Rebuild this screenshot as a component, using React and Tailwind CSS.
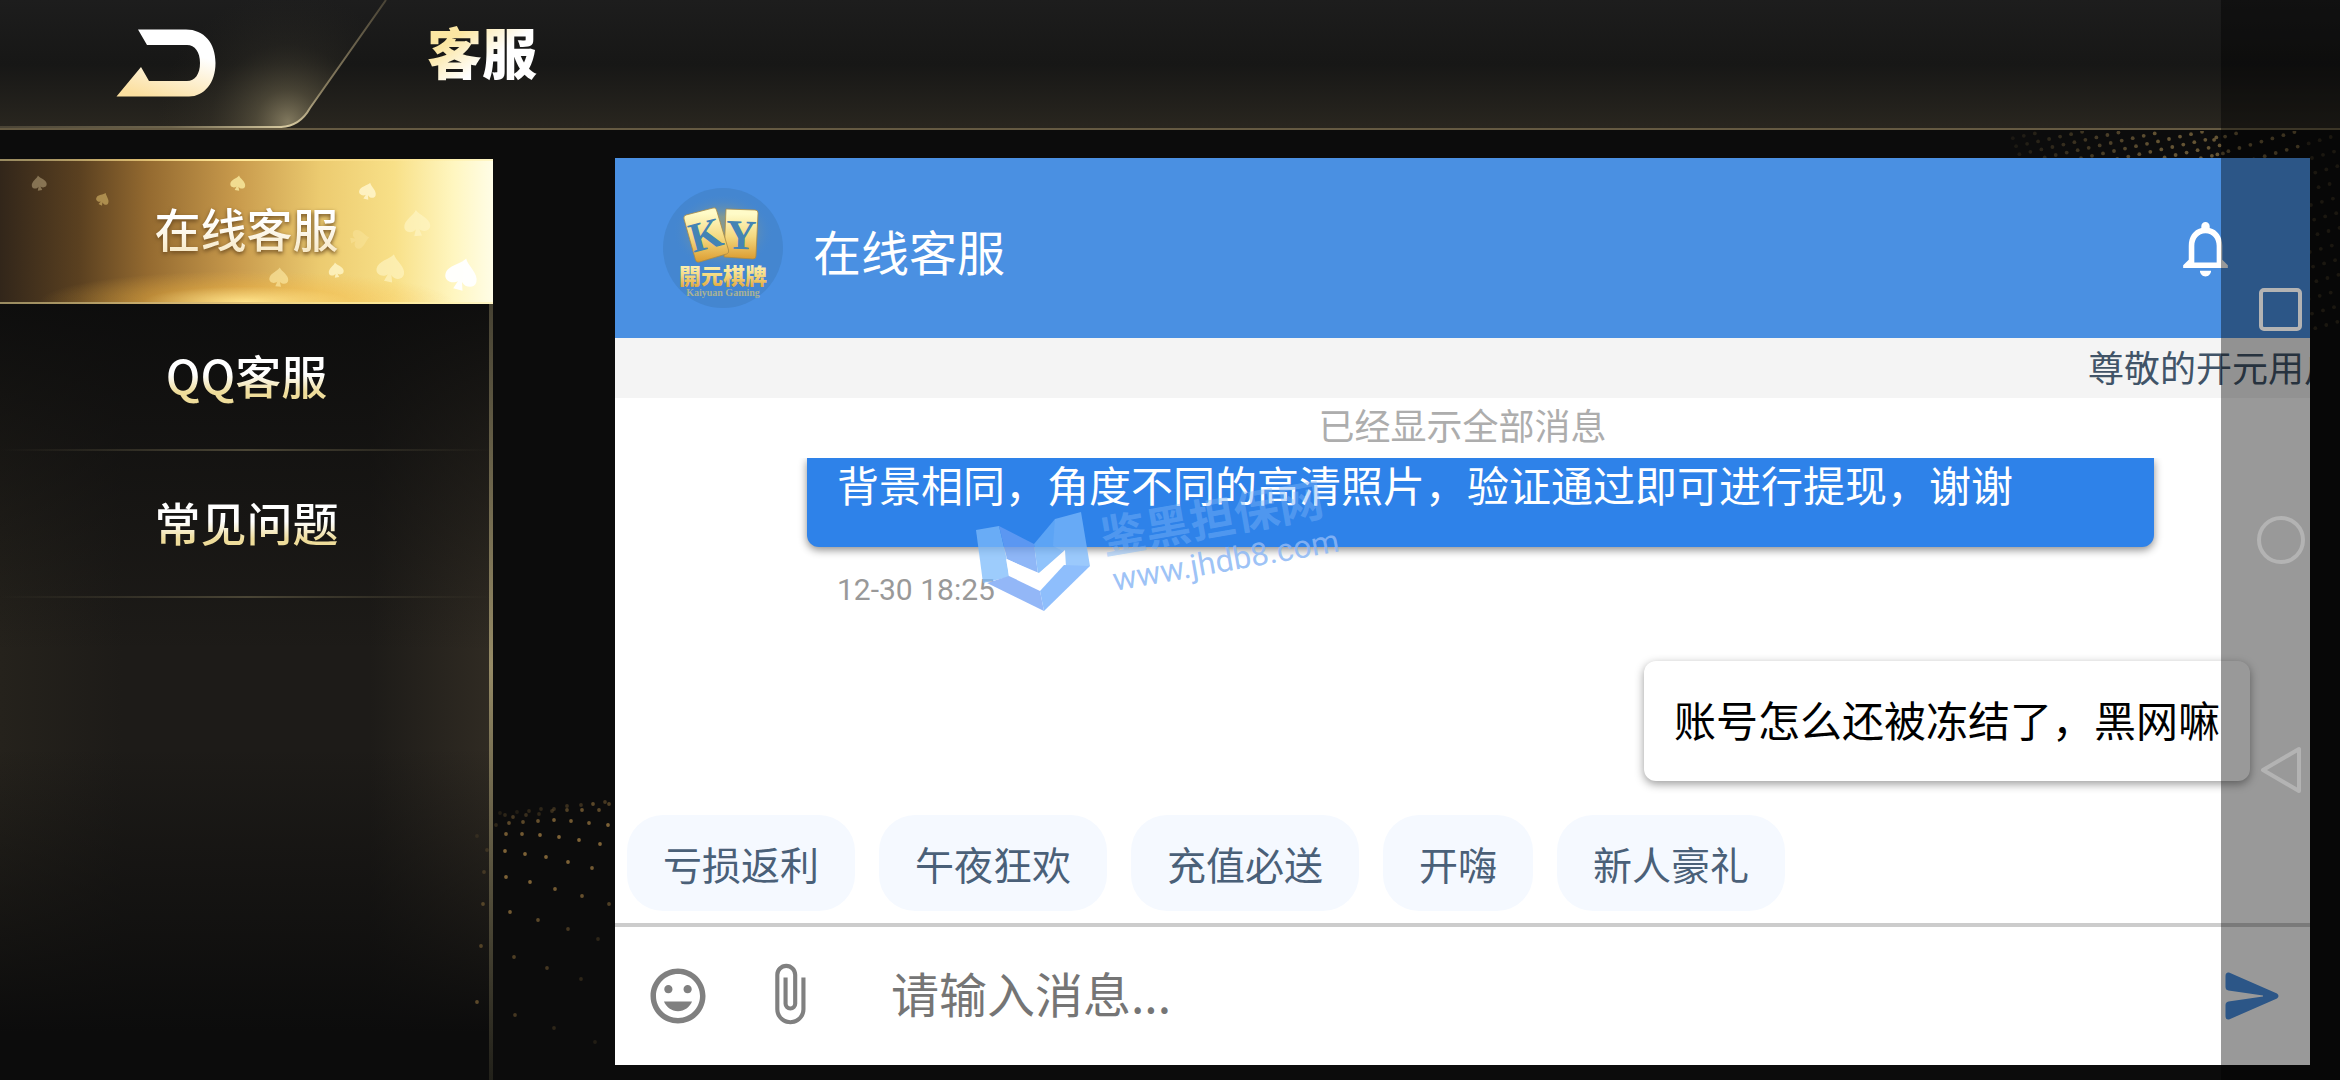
import { useState } from 'react';
import { MdNotificationsNone, MdInsertEmoticon, MdAttachFile } from 'react-icons/md';

const menus = [
  { id: 'online', label: '在线客服' },
  { id: 'qq', label: 'QQ客服' },
  { id: 'faq', label: '常见问题' },
];

const quickReplies = ['亏损返利', '午夜狂欢', '充值必送', '开嗨', '新人豪礼'];

// x, y, size, rotation, color, opacity
const spades = [
  [39, 22, 15, -8, '#c8b48a', 0.5],
  [103, 38, 13, 25, '#c8a860', 0.7],
  [238, 22, 15, 8, '#f5e398', 0.9],
  [368, 30, 17, 15, '#fff4c8', 0.9],
  [417, 62, 26, -5, '#fff6c8', 0.6],
  [360, 78, 19, 80, '#fff0b0', 0.3],
  [336, 109, 15, -8, '#fff6c8', 0.8],
  [279, 116, 19, 5, '#ffeeaa', 0.6],
  [391, 107, 28, 12, '#fff6c8', 0.6],
  [462, 113, 32, 15, '#ffffff', 0.95],
];

// x, y, opacity
const waveDots = [
  [200, 53, 0.2], [205, 55, 0.3], [217, 52, 0.2], [226, 55, 0.4], [239, 54, 0.3], [252, 51, 0.4], [267, 46, 0.4], [281, 45, 0.4],
  [293, 44, 0.7], [305, 42, 0.5], [309, 44, 0.6], [196, 65, 0.3], [209, 63, 0.7], [223, 62, 0.7], [238, 61, 0.8], [254, 60, 0.9],
  [271, 61, 0.9], [289, 63, 0.9], [308, 65, 1], [213, 57, 0.5], [229, 51, 0.3], [241, 49, 0.3], [254, 49, 0.4], [267, 50, 0.6],
  [282, 50, 0.8], [299, 50, 0.7], [206, 74, 0.9], [222, 74, 0.9], [240, 75, 1], [259, 77, 1], [279, 80, 1], [300, 84, 1],
  [205, 91, 1], [225, 94, 1], [246, 97, 1], [268, 102, 1], [292, 108, 0.9], [206, 117, 1], [230, 122, 1], [255, 129, 0.9],
  [282, 136, 0.8], [309, 144, 0.6], [210, 152, 0.9], [238, 160, 0.7], [268, 169, 0.5], [298, 179, 0.3], [214, 197, 0.6],
  [247, 208, 0.5], [281, 219, 0.3], [215, 255, 0.5], [254, 268, 0.3], [295, 282, 0.2], [177, 76, 0.2], [187, 90, 0.3],
  [184, 112, 0.4], [183, 144, 0.6], [181, 186, 0.6], [177, 242, 0.7],
];

// skewed rows of dots, packed closer together towards the left
const cornerDots = [];
for (let j = -6; j < 14; j++) {
  for (let i = -34; i < 4; i++) {
    const packed = i < -8;
    const x = 312 + i * 11 + j * 3.3;
    const y = packed ? 20 - (i + 18) * 2.4 + j * 8 : 45 - i * 3.2 - 18 + j * 14.6;
    if (x < 340 && x > 10 && y > 0 && y < 200) {
      cornerDots.push([x, y, x > 305 ? 0.35 : Math.min(0.9, 0.1 + x / 200)]);
    }
  }
}

function Dots({ dots, className, color }) {
  return (
    <svg className={className} fill={color} aria-hidden="true">
      {dots.map(([x, y, o], i) => (
        <circle key={i} cx={x} cy={y} r="1.9" opacity={o} />
      ))}
    </svg>
  );
}

function BackIcon() {
  return (
    <svg width="100" height="68" viewBox="0 0 100 68" aria-hidden="true">
      <defs>
        <linearGradient id="back" x1="0.7" y1="0" x2="0.3" y2="1">
          <stop offset="0.3" stopColor="#fff" />
          <stop offset="1" stopColor="#fbdf9f" />
        </linearGradient>
      </defs>
      <path
        fill="url(#back)"
        d="M22 0.5h48C88 0.5 99.500 14 99.500 34S88 67.500 73 67.500H0.500L25 38l8 14h38c8 0 13-7 13-18s-5-18-13-18H31z"
      />
    </svg>
  );
}

function HeaderEdge() {
  return (
    <svg className="absolute left-0 top-0" width="400" height="130" viewBox="0 0 400 130" aria-hidden="true">
      <defs>
        <radialGradient id="glow" cx="288" cy="122" r="130" gradientUnits="userSpaceOnUse">
          <stop offset="0" stopColor="#a89d7a" stopOpacity="0.7" />
          <stop offset="0.25" stopColor="#857b5c" stopOpacity="0.4" />
          <stop offset="0.6" stopColor="#5a5340" stopOpacity="0.14" />
          <stop offset="1" stopColor="#3a362a" stopOpacity="0" />
        </radialGradient>
        <linearGradient id="edge" x1="386" y1="0" x2="290" y2="127" gradientUnits="userSpaceOnUse">
          <stop offset="0" stopColor="#4a4436" />
          <stop offset="0.7" stopColor="#8a7f62" />
          <stop offset="1" stopColor="#d6c9a0" />
        </linearGradient>
        <linearGradient id="edgeBottom" x1="0" y1="0" x2="285" y2="0" gradientUnits="userSpaceOnUse">
          <stop offset="0" stopColor="#4a4436" />
          <stop offset="0.6" stopColor="#6f664e" />
          <stop offset="1" stopColor="#d6c9a0" />
        </linearGradient>
      </defs>
      <path fill="url(#glow)" d="M0 0H386L310 108Q300 126 281 127H0z" />
      <path fill="none" stroke="url(#edge)" strokeWidth="2" d="M386 0L310 108Q300 126 281 127" />
      <rect x="0" y="126" width="282" height="2" fill="url(#edgeBottom)" />
    </svg>
  );
}

function Logo() {
  return (
    <svg width="120" height="120" viewBox="0 0 120 120" role="img" aria-label="開元棋牌">
      <defs>
        <linearGradient id="gold" x1="0" y1="0" x2="0" y2="1">
          <stop offset="0.1" stopColor="#fffbc8" />
          <stop offset="0.55" stopColor="#f4d980" />
          <stop offset="1" stopColor="#dc9c30" />
        </linearGradient>
        <radialGradient id="halo">
          <stop offset="0.4" stopColor="#b5a860" stopOpacity="0.55" />
          <stop offset="1" stopColor="#4688d0" stopOpacity="0" />
        </radialGradient>
      </defs>
      <circle cx="60" cy="60" r="60" fill="#4486d0" />
      <ellipse cx="60" cy="44" rx="50" ry="38" fill="url(#halo)" />
      <path d="M63 21l29 1q3 0 3 3l-2 43q0 3-3 3l-29-2z" fill="url(#gold)" stroke="#a98a45" strokeWidth="0.8" />
      <path d="M23 27l27-7q3-1 3.500 2l12 40q1 3-2 4l-27 8q-3 1-4-2L21 31q-1-3 2-4z" fill="url(#gold)" stroke="#a98a45" strokeWidth="0.8" />
      <g fontFamily="'Liberation Serif', serif" fontWeight="700" fill="#4484b4">
        <text x="43" y="61" fontSize="42" textAnchor="middle" transform="rotate(-15 43 48)">K</text>
        <text x="78" y="61" fontSize="42" textAnchor="middle" transform="rotate(2 78 48)">Y</text>
      </g>
      <text x="60" y="96" fontSize="22" fontWeight="900" textAnchor="middle" fontFamily="'Noto Sans CJK TC', sans-serif" fill="url(#gold)">開元棋牌</text>
      <text x="60" y="108" fontSize="10" fontWeight="700" textAnchor="middle" fontFamily="'Liberation Serif', serif" fill="#a9b294">Kaiyuan Gaming</text>
    </svg>
  );
}

function Watermark() {
  return (
    <div className="pointer-events-none absolute left-[360px] top-[53px]" aria-hidden="true">
      <svg width="116" height="102" viewBox="0 0 116 102" opacity="0.75">
        <path fill="#7dbbfb" d="M1 19l23-4 8 34 2 17-26 6z" />
        <path fill="#6a9ff5" d="M24 15l35 18 4 30-31-15z" />
        <path fill="#6cb0fa" d="M59 33L80 8l10 33-27 22z" />
        <path fill="#7ab8fb" d="M80 8l26-7 9 54-26 2 1-16-12-6z" />
        <path fill="#fff" d="M31 48l33 14 26-23 1 17-26 24-31-15z" />
        <path fill="#6f9ff5" d="M12 72l22-7 31 15 4 20z" />
        <path fill="#69a9fc" d="M65 80l24-26 26 1-46 45z" />
      </svg>
      <div className="absolute -top-4 left-[128px] w-max -rotate-10 font-['Roboto','Noto_Sans_CJK_SC',sans-serif]">
        <p className="text-[45px] font-bold leading-[48px] text-[#7ab4f8]/45">鉴黑担保网</p>
        <p className="pl-1 text-[32px] leading-[36px] text-[#8db8f5]/85">www.jhdb8.com</p>
      </div>
    </div>
  );
}

function Sidebar({ active, onSelect }) {
  return (
    <nav className="relative flex w-[493px] shrink-0 flex-col bg-[linear-gradient(to_bottom,#0c0c0c_15%,transparent_55%,transparent_65%,#0c0c0c_95%),linear-gradient(to_right,#25221c,#1d1b18_25%,#1d1b18_75%,#302b23)] pt-[29px]">
      <div className="absolute bottom-0 right-0 top-[29px] w-1 bg-linear-to-b from-[#2a2820] via-[#968b66] via-55% to-[#22211a]" />
      {menus.map((menu) =>
        menu.id === active ? (
          <button
            key={menu.id}
            onClick={() => onSelect(menu.id)}
            className="relative flex h-[145px] items-center justify-center overflow-hidden border-y-2 border-[#fff0a8]/50 bg-[radial-gradient(ellipse_42%_22%_at_50%_100%,#ffe38a,#f5b94466_50%,transparent),linear-gradient(to_right,#32261a,#5a4020_16%,#946a30_30%,#c89a4c_48%,#eccb70_65%,#f8e088_80%,#fff6c0_92%,#fffde6)] pb-2 text-[46px] font-medium"
          >
            <svg className="absolute inset-0 size-full" aria-hidden="true">
              {spades.map(([x, y, s, r, color, o]) => (
                <path
                  key={x}
                  fill={color}
                  opacity={o}
                  transform={`translate(${x} ${y}) rotate(${r}) scale(${s / 20}) translate(-10 -10)`}
                  d="M10 0C12 4 20 7 20 12.500C20 17 14 18 11.300 14.800L13 20H7L8.700 14.800C6 18 0 17 0 12.500C0 7 8 4 10 0Z"
                />
              ))}
            </svg>
            <span className="relative bg-linear-to-b from-white from-40% to-[#f5e2b4] bg-clip-text text-transparent drop-shadow-[0_2px_2px_#6b4a20]">
              {menu.label}
            </span>
          </button>
        ) : (
          <button
            key={menu.id}
            onClick={() => onSelect(menu.id)}
            className="flex h-[147px] flex-col items-center text-[46px] font-medium"
          >
            <span className="flex flex-1 items-center pb-1">
              <span className="bg-linear-to-b from-white from-50% to-[#eedc9a] to-75% bg-clip-text text-transparent">{menu.label}</span>
            </span>
            <span className="h-[2px] w-full bg-linear-to-r from-transparent via-[#4a4535] to-transparent" />
          </button>
        )
      )}
    </nav>
  );
}

function Composer() {
  const [text, setText] = useState('');

  return (
    <form onSubmit={(e) => e.preventDefault()} className="flex h-[142px] items-center border-t-4 border-[#cccccc] pl-[30px] pr-[31px] text-[#808080]">
      <button type="button" aria-label="表情">
        <MdInsertEmoticon size={66} />
      </button>
      <button type="button" aria-label="附件" className="ml-[45px] pb-1">
        <MdAttachFile size={66} />
      </button>
      <input
        aria-label="消息"
        value={text}
        onChange={(e) => setText(e.target.value)}
        placeholder="请输入消息..."
        className="ml-[69px] min-w-0 flex-1 pb-2 text-[48px] leading-[64px] text-black outline-none placeholder:text-[#757575]"
      />
      <button aria-label="发送">
        <svg width="54" height="48" viewBox="0 0 54 48" fill="#4a90e2" aria-hidden="true">
          <path d="M4 0.500L52 21.500Q55 24 52 26.500L4 47.500Q0.500 48 0.500 44V33Q0.500 30 3.500 29.500L38 24.500V23.500L3.500 18.500Q0.500 18 0.500 15V4Q0.500 0 4 0.500z" />
        </svg>
      </button>
    </form>
  );
}

function ChatPanel() {
  return (
    <section className="flex min-w-0 flex-1 flex-col bg-white">
      <header className="flex h-[180px] items-center bg-[#4a90e2] pl-12 pr-[71px] text-white">
        <Logo />
        <h2 className="ml-[30px] flex-1 pt-1 text-[48px]">在线客服</h2>
        <button aria-label="通知">
          <MdNotificationsNone size={67} />
        </button>
      </header>

      <div className="h-[60px] bg-[#f4f4f4]">
        <p className="ml-auto w-[222px] overflow-hidden whitespace-nowrap text-[36px] leading-[56px] text-[#415468]">尊敬的开元用户</p>
      </div>
      <p className="pb-2 text-center text-[36px] leading-[52px] text-[#adadad]">已经显示全部消息</p>

      {/* Messages */}
      <div className="relative flex flex-1 flex-col overflow-hidden pl-48 pr-[60px]">
        <p className="mr-24 h-[89px] rounded-b-xl bg-[#2e82e9] px-[30px] text-[42px] leading-[52px] text-white shadow-[0_3px_8px_rgba(0,0,0,0.45)]">
          背景相同，角度不同的高清照片，验证通过即可进行提现，谢谢
        </p>
        <time className="mt-[23px] pl-[30px] font-['Roboto',sans-serif] text-[30px] leading-[40px] text-[#999999]">12-30 18:25</time>
        <p className="mt-[51px] self-end rounded-xl bg-white px-[30px] pb-8 pt-7 text-[42px] leading-[60px] text-black shadow-[0_3px_10px_rgba(0,0,0,0.4)]">
          账号怎么还被冻结了，黑网嘛
        </p>
        <Watermark />
      </div>

      <div className="flex gap-6 px-3 pb-3">
        {quickReplies.map((reply) => (
          <button key={reply} className="h-24 rounded-[36px] bg-[#f5f9ff] px-9 text-[39px] text-[#4a6078]">
            {reply}
          </button>
        ))}
      </div>
      <Composer />
    </section>
  );
}

export default function App() {
  const [active, setActive] = useState('online');

  return (
    <div className="relative flex min-h-screen flex-col overflow-hidden bg-[#0c0c0c] font-['Noto_Sans_CJK_SC',sans-serif]">
      <header className="relative flex h-[130px] items-start border-b-2 border-[#655a42] bg-linear-to-b from-[#1d1d1d] via-[#171716] via-50% to-[#29261f]">
        <HeaderEdge />
        <button aria-label="返回" className="relative ml-[116px] mt-[29px]">
          <BackIcon />
        </button>
        <h1 className="ml-[211px] mt-[10px] bg-linear-to-br from-[#fbe6a2] from-30% via-white via-60% to-white bg-clip-text text-[55px] font-black leading-[80px] text-transparent">
          客服
        </h1>
      </header>

      <Dots dots={cornerDots} color="#6e5c38" className="absolute right-0 top-[131px] h-[200px] w-[340px]" />

      <div className="relative flex flex-1">
        <Sidebar active={active} onSelect={setActive} />
        <main className="flex min-w-0 flex-1 pb-[15px] pl-[122px] pr-[30px] pt-[28px]">
          <ChatPanel />
        </main>
        <Dots dots={waveDots} color="#7d6236" className="pointer-events-none absolute bottom-0 left-[300px] h-[320px] w-[315px]" />
      </div>

      {/* System navigation */}
      <div className="absolute inset-y-0 right-0 flex w-[119px] flex-col items-center justify-center gap-[170px] bg-black/40 text-[#b3b3b3]">
        <button aria-label="最近任务">
          <svg width="60" height="60" fill="none" stroke="currentColor" strokeWidth="4" aria-hidden="true">
            <rect x="10" y="10" width="39" height="39" rx="3" />
          </svg>
        </button>
        <button aria-label="主屏幕">
          <svg width="60" height="60" fill="none" stroke="currentColor" strokeWidth="4" aria-hidden="true">
            <circle cx="30" cy="30" r="22" />
          </svg>
        </button>
        <button aria-label="后退">
          <svg width="60" height="60" fill="none" stroke="currentColor" strokeWidth="4" strokeLinejoin="round" aria-hidden="true">
            <path d="M12 30L48 9V51z" />
          </svg>
        </button>
      </div>
    </div>
  );
}
